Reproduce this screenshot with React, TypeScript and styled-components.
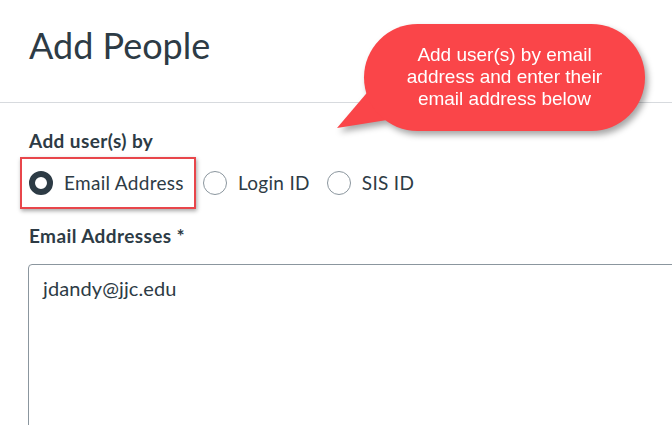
import React from "react";
import styled, { createGlobalStyle } from "styled-components";

const GlobalStyle = createGlobalStyle`
  html, body {
    margin: 0;
    padding: 0;
    background: #fff;
  }
  body {
    font-family: Lato, "Noto Sans", sans-serif;
    color: #2d3b45;
    overflow: hidden;
  }
`;

const Page = styled.div`
  position: relative;
  width: 672px;
  height: 425px;
  overflow: hidden;
`;

const Header = styled.header`
  height: 103px;
  box-sizing: border-box;
  padding: 23.5px 29px 0;
  border-bottom: 1px solid #d7dade;
`;

const Title = styled.h1`
  margin: 0;
  font-size: 36px;
  font-weight: 400;
  line-height: 1.2;
`;

const Content = styled.main`
  padding: 27px 0 0 29px;
`;

const FieldLabel = styled.div<{ $gap?: number }>`
  font-size: 19px;
  font-weight: 700;
  line-height: 1.2;
  letter-spacing: 0.4px;
  margin-top: ${(p) => p.$gap ?? 0}px;
`;

const RadioRow = styled.div`
  display: flex;
  align-items: center;
  gap: 7px;
  margin: 4px 0 0 -9px;
`;

const Option = styled.label<{ $highlight?: boolean }>`
  display: flex;
  align-items: center;
  gap: 11px;
  font-size: 19px;
  letter-spacing: 0.3px;
  line-height: 24px;
  ${(p) =>
    p.$highlight
      ? `
    border: 2px solid #e8464b;
    padding: 12px 10px 12px 7px;
    box-shadow: 1px 2px 4px rgba(0, 0, 0, 0.35);
  `
      : `
    padding-right: 10px;
  `}
`;

const Radio = styled.span<{ $checked?: boolean }>`
  width: 24px;
  height: 24px;
  box-sizing: border-box;
  border-radius: 50%;
  background: #fff;
  border: ${(p) => (p.$checked ? "6.5px solid #2d3b45" : "1px solid #8b969e")};
`;

const EmailBox = styled.textarea`
  display: block;
  margin: 16px 0 0 -1px;
  width: 700px;
  height: 200px;
  box-sizing: border-box;
  padding: 11px 14px;
  border: 1px solid #8b969e;
  border-radius: 4px;
  font-family: Lato, "Noto Sans", sans-serif;
  font-size: 20px;
  letter-spacing: 0.1px;
  line-height: 1.2;
  color: #2d3b45;
  resize: none;
  outline: none;
`;

const Callout = styled.div`
  position: absolute;
  left: 337px;
  top: 24px;
  filter: drop-shadow(3px 4px 3px rgba(0, 0, 0, 0.35));
`;

const Tail = styled.svg`
  position: absolute;
  left: 0;
  top: 0;
`;

const Bubble = styled.div`
  position: relative;
  margin-left: 27px;
  width: 281px;
  height: 107px;
  box-sizing: border-box;
  padding-top: 20px;
  border-radius: 54px;
  background: #fa4549;
  color: #fff;
  font-family: "Liberation Sans", Arial, sans-serif;
  font-size: 19px;
  line-height: 22px;
  text-align: center;
`;

const options = [
  { label: "Email Address", checked: true },
  { label: "Login ID" },
  { label: "SIS ID" },
];

export default function App() {
  return (
    <Page>
      <GlobalStyle />
      <Header>
        <Title>Add People</Title>
      </Header>
      <Content>
        <FieldLabel>Add user(s) by</FieldLabel>
        <RadioRow>
          {options.map((o) => (
            <Option key={o.label} $highlight={o.checked}>
              <Radio $checked={o.checked} />
              {o.label}
            </Option>
          ))}
        </RadioRow>
        <FieldLabel $gap={16}>Email Addresses *</FieldLabel>
        <EmailBox readOnly defaultValue="jdandy@jjc.edu" />
      </Content>
      <Callout>
        <Tail width="60" height="110" viewBox="0 0 60 110">
          <polygon points="0,104 34,64 50,96" fill="#fa4549" />
        </Tail>
        <Bubble>
          Add user(s) by email
          <br />
          address and enter their
          <br />
          email address below
        </Bubble>
      </Callout>
    </Page>
  );
}
